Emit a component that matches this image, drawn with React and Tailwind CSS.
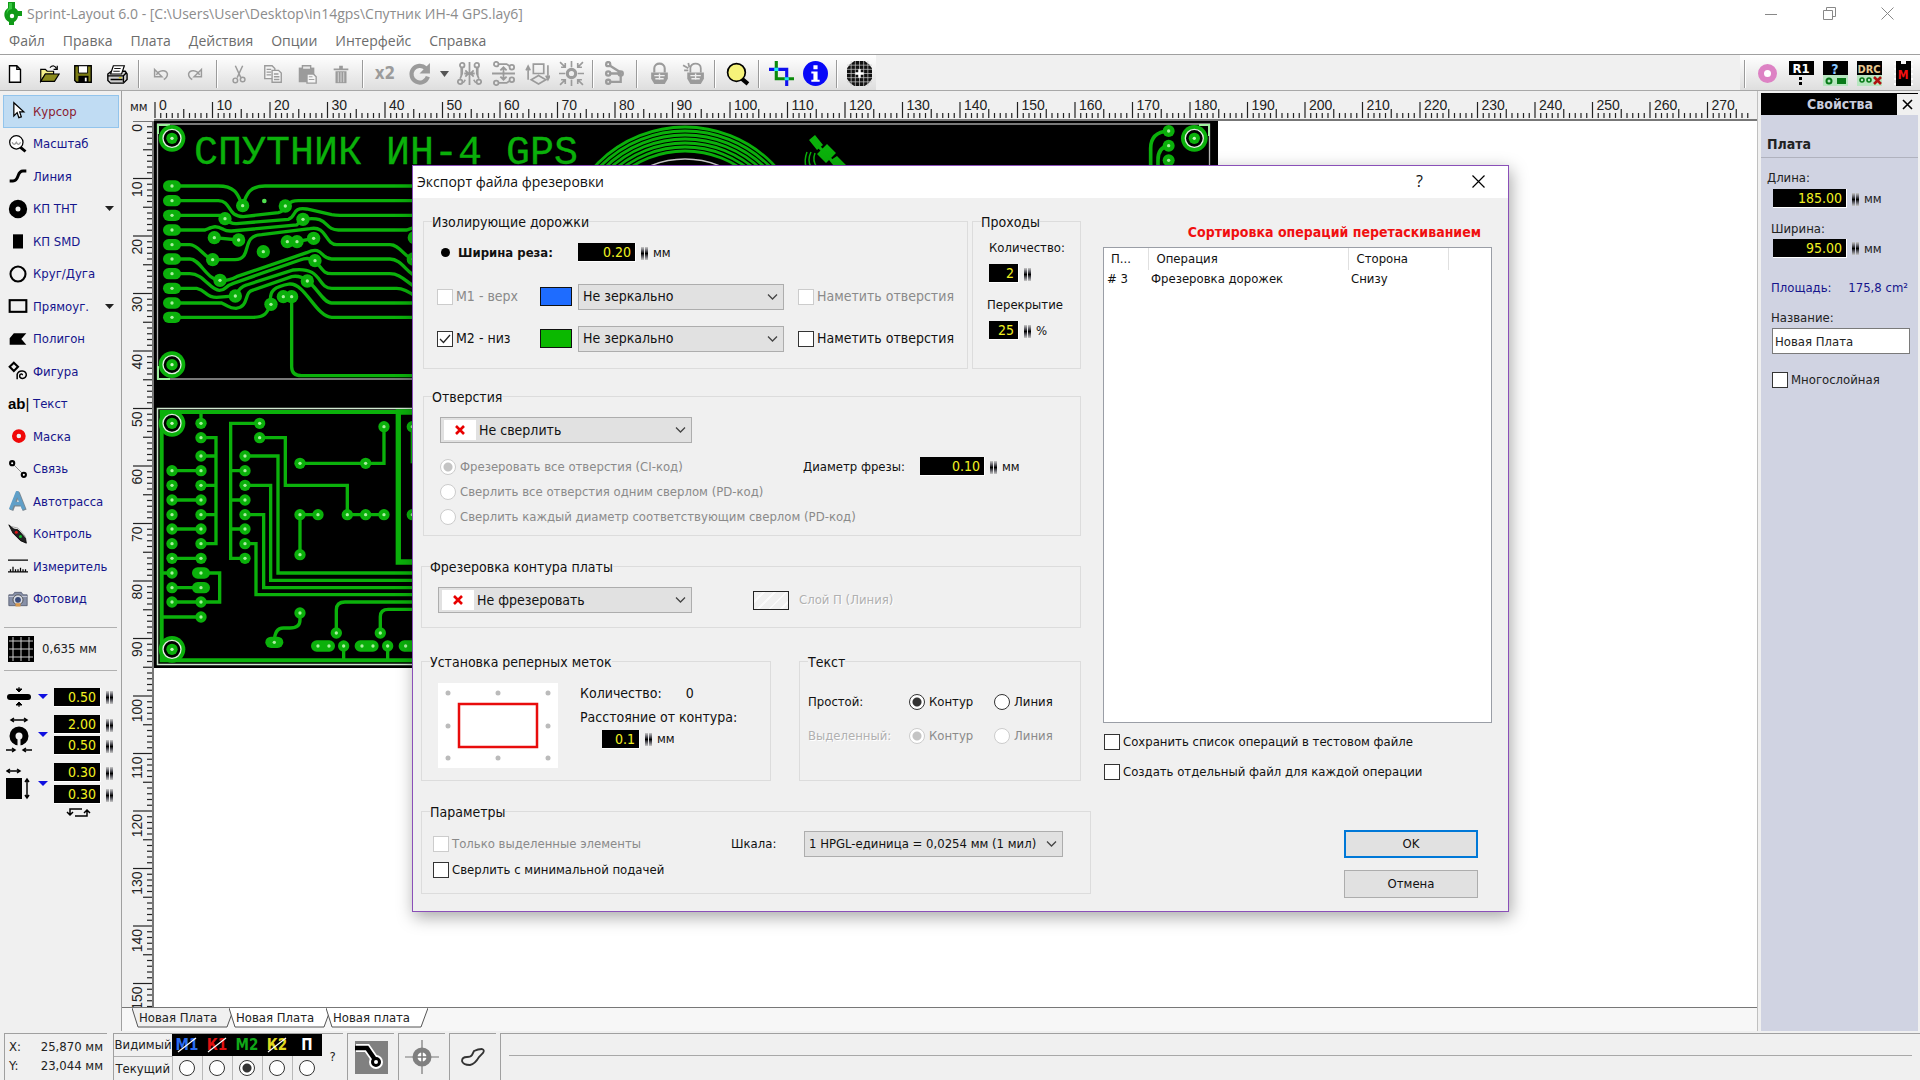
import { useState } from 'react';
import clsx from 'clsx';

const MENU = ['Файл', 'Правка', 'Плата', 'Действия', 'Опции', 'Интерфейс', 'Справка'];
const BLACK = '#000';
const GRAY = '#9b9b9b';

/* ---------- small controls ---------- */

function Spinner() {
  return (
    <svg width="9" height="18" viewBox="0 0 9 18" className="shrink-0">
      <defs>
        <linearGradient id="wheel" x1="0" y1="0" x2="0" y2="1">
          <stop offset="0" stopColor="#c8c8c8" />
          <stop offset="0.3" stopColor="#55555c" />
          <stop offset="0.5" stopColor="#000" />
          <stop offset="0.7" stopColor="#55555c" />
          <stop offset="1" stopColor="#c8c8c8" />
        </linearGradient>
      </defs>
      <rect x="1" y="3" width="3" height="13" fill="url(#wheel)" />
      <rect x="5" y="3" width="3" height="13" fill="url(#wheel)" />
    </svg>
  );
}

function NumField({ label, value, className, unit }) {
  const [v, setV] = useState(value);
  return (
    <span className="flex items-center">
      <input
        aria-label={label}
        value={v}
        onChange={(e) => setV(e.target.value)}
        className={clsx(
          'h-[19px] border-r border-b border-white bg-black pr-1 text-right text-[14px] leading-[17px] text-[#f0f020] outline-none',
          className,
        )}
      />
      <span className="ml-1 flex"><Spinner /></span>
      {unit && <span className="ml-1 text-[13px]">{unit}</span>}
    </span>
  );
}

function Check({ label, checked, disabled, className }) {
  const [on, setOn] = useState(!!checked);
  return (
    <label className={clsx('flex items-center gap-[3px]', disabled && 'text-[#8a8a8a]', className)}>
      <span className="relative flex">
        <input
          type="checkbox"
          checked={on}
          disabled={disabled}
          onChange={() => setOn(!on)}
          className="size-4 appearance-none border border-[#333] bg-white disabled:border-[#ccc]"
        />
        {on && (
          <svg className="pointer-events-none absolute inset-0" width="16" height="16" viewBox="0 0 16 16">
            <path d="M3 8l3.5 3.5L13 4" fill="none" stroke="#222" strokeWidth="1.3" />
          </svg>
        )}
      </span>
      <span className="whitespace-nowrap">{label}</span>
    </label>
  );
}

function Radio({ name, label, checked, disabled, className, ariaLabel }) {
  return (
    <label className={clsx('flex items-center gap-1', disabled && 'text-[#8a8a8a]', className)}>
      <input
        type="radio"
        name={name}
        aria-label={ariaLabel}
        defaultChecked={checked}
        disabled={disabled}
        className="size-4 shrink-0 appearance-none rounded-full border border-[#333] bg-white checked:bg-[radial-gradient(circle,#333_0_4px,#fff_5px)] disabled:border-[#ccc] disabled:checked:bg-[radial-gradient(circle,#c4c4c4_0_4px,#fff_5px)]"
      />
      {label && <span className="whitespace-nowrap">{label}</span>}
    </label>
  );
}

function Select({ label, value, className, cross, small }) {
  return (
    <span className={clsx('relative flex', className)}>
      <select
        aria-label={label}
        className={clsx(
          'h-[26px] w-full appearance-none border border-[#adadad] bg-[#e1e1e1] outline-none',
          cross ? 'pl-[38px]' : 'pl-1',
          small && 'text-[13px]',
        )}
      >
        <option>{value}</option>
      </select>
      {cross && (
        <span className="pointer-events-none absolute top-[3px] left-1 flex h-5 w-8 items-center justify-center bg-white">
          <svg width="10" height="10" viewBox="0 0 10 10">
            <path d="M1 1l8 8M9 1l-8 8" stroke="#e80000" strokeWidth="2.6" />
          </svg>
        </span>
      )}
      <svg className="pointer-events-none absolute top-2 right-1.5" width="11" height="10" viewBox="0 0 11 10">
        <path d="M1 2.5l4.5 4.5L10 2.5" fill="none" stroke="#444" strokeWidth="1.3" />
      </svg>
    </span>
  );
}

function Group({ title, className, children }) {
  return (
    <fieldset className={clsx('border border-[#dcdcdc]', className)}>
      <legend className="ml-2 h-5 leading-[22px]">{title}</legend>
      {children}
    </fieldset>
  );
}

/* ---------- toolbar ---------- */

const ICONS = {
  new: <path d="M6 3h8l4 4v14H6zM14 3v4h4" fill="#fff" stroke={BLACK} strokeWidth="1.5" />,
  open: (
    <>
      <path d="M3 20V7h5l2 2h7v3H8z" fill="#f5f08a" stroke={BLACK} strokeWidth="1.3" />
      <path d="M3 20l5-8h15l-5 8z" fill="#8a8a1c" stroke={BLACK} strokeWidth="1.3" />
      <path d="M13 5c3-3 6-2 7 1M21 3v4h-4" fill="none" stroke={BLACK} strokeWidth="1.3" />
    </>
  ),
  save: (
    <>
      <path d="M3 3h18v18H5l-2-2z" fill="#7c7c14" stroke={BLACK} strokeWidth="1.5" />
      <path d="M7 3h10v8H7z" fill="#fff" stroke={BLACK} />
      <path d="M7 14h11v7H7z" fill={BLACK} />
      <path d="M14 16h2v4h-2z" fill="#fff" />
    </>
  ),
  print: (
    <>
      <path d="M2 12l4-3h15l2 3v6l-4 4H5l-3-3z" fill="#cfcfcf" stroke={BLACK} strokeWidth="1.5" />
      <path d="M8 3h12l-3 9H5z" fill="#fff" stroke={BLACK} strokeWidth="1.3" />
      <path d="M9 6h7M8 9h7" stroke={BLACK} />
      <path d="M2 14h17l3-3M5 18h13M19 14v7" fill="none" stroke={BLACK} strokeWidth="1.5" />
      <path d="M14 16h3" stroke="#d8d020" strokeWidth="1.5" />
    </>
  ),
  undo: <path d="M5 7v8h8zM7 13c3-6 11-6 12-1 0 3-2 5-4 6" fill="none" stroke={GRAY} strokeWidth="1.6" />,
  redo: <path d="M19 7v8h-8zM17 13c-3-6-11-6-12-1 0 3 2 5 4 6" fill="none" stroke={GRAY} strokeWidth="1.6" />,
  cut: (
    <g fill="none" stroke={GRAY} strokeWidth="1.6">
      <path d="M8 3l6 13M16 3l-6 13" />
      <circle cx="8" cy="19" r="2.5" />
      <circle cx="16" cy="18" r="2.5" />
    </g>
  ),
  copy: (
    <g fill="#f4f4f4" stroke={GRAY} strokeWidth="1.5">
      <path d="M3 3h8l3 3v11H3z" />
      <path d="M11 8h7l3 3v10H11z" />
      <path d="M5 7h5M5 10h5M5 13h5M13 12h5M13 15h6M13 18h6" />
    </g>
  ),
  paste: (
    <>
      <path d="M3 5h17v16H3z" fill={GRAY} />
      <path d="M7 3h9v4H7z" fill="#e8e8e8" stroke={GRAY} strokeWidth="1.5" />
      <path d="M12 12h7l3 3v7H12z" fill="#f4f4f4" stroke={GRAY} strokeWidth="1.5" />
      <path d="M14 15h4M14 18h6" stroke={GRAY} />
    </>
  ),
  trash: (
    <>
      <path d="M4 6h16v2H4zM10 3h4v3h-4z" fill={GRAY} />
      <path d="M6 9h12v13H6z" fill={GRAY} />
      <path d="M9 10v11M12 10v11M15 10v11" stroke="#ddd" />
    </>
  ),
  rotate: (
    <>
      <path d="M18 7a8 8 0 1 0 2 8" fill="none" stroke={GRAY} strokeWidth="4" />
      <path d="M22 2v10H12z" fill={GRAY} />
    </>
  ),
  mirrorH: (
    <g fill="none" stroke={GRAY} strokeWidth="1.7">
      <path d="M12 1v22M7 12h3M14 12h3M8 9l3 3-3 3M16 9l-3 3 3 3M5 6v6l-2 5M19 6v6l2 5" />
      <path d="M4 6v8M20 6v8M8 18l-2 3M16 18l2 3" strokeWidth="1.4" />
      <circle cx="5" cy="4" r="2.2" /><circle cx="19" cy="4" r="2.2" />
      <circle cx="3" cy="20" r="2.2" /><circle cx="21" cy="20" r="2.2" />
    </g>
  ),
  mirrorV: (
    <g fill="none" stroke={GRAY} strokeWidth="1.7">
      <path d="M1 12h22M12 7v10M9 9l3-3 3 3M9 15l3 3 3-3M7 3h8l3 2M7 21h8l3-2" />
      <circle cx="5" cy="3" r="2.2" /><circle cx="20" cy="6" r="2.2" />
      <circle cx="5" cy="21" r="2.2" /><circle cx="20" cy="18" r="2.2" />
    </g>
  ),
  toSide: (
    <g fill="none" stroke={GRAY} strokeWidth="1.6">
      <path d="M8 3h10v9H8zM6 18l7-4 7 4-7 4zM3 18V6M1 9l2-4 2 4M22 4v13M20 14l2 4 2-4" />
    </g>
  ),
  snap: (
    <g fill="none" stroke={GRAY} strokeWidth="1.6">
      <circle cx="12" cy="12" r="4" strokeWidth="3" />
      <path d="M12 0v6M12 18v6M0 12h6M18 12h6M1 1l5 5M6 2v4H2M23 1l-5 5M18 2v4h4M1 23l5-5M6 22v-4H2M23 23l-5-5M18 22v-4h4" />
    </g>
  ),
  nodes: (
    <g fill="none" stroke={GRAY} strokeWidth="2.2">
      <path d="M6 4l11 7v9H7M7 12h9" />
      <circle cx="5" cy="3" r="2" /><circle cx="5" cy="12" r="2" />
      <circle cx="5" cy="20" r="2" /><circle cx="17" cy="12" r="2" />
    </g>
  ),
  lock: (
    <>
      <path d="M7 11V7c0-6 10-6 10 0v4" fill="none" stroke={GRAY} strokeWidth="2" />
      <path d="M4 11h16v6l-3 5H7l-3-5z" fill={GRAY} />
      <path d="M7 14h10M8 17h8M12 12v6" stroke="#eee" strokeWidth="1.3" />
    </>
  ),
  unlock: (
    <>
      <path d="M9 11V7c0-6 10-6 10 0v4M2 4l5 3M3 9h4M7 2l1 4" fill="none" stroke={GRAY} strokeWidth="1.7" />
      <path d="M6 11h16v6l-3 5H9l-3-5z" fill={GRAY} />
      <path d="M9 14h10M10 17h8M14 12v6" stroke="#eee" strokeWidth="1.3" />
    </>
  ),
  zoom: (
    <>
      <path d="M16 17l6 5" stroke={BLACK} strokeWidth="4" />
      <circle cx="11" cy="11" r="8.5" fill="#f6f37a" stroke={BLACK} strokeWidth="1.6" />
    </>
  ),
  crop: (
    <g fill="none" strokeWidth="3">
      <path d="M7 0v17h17" stroke="#0a8a0a" />
      <path d="M0 8h17v16" stroke="#1010ee" />
      <path d="M5 8h4M15 17h4" stroke="#20e8e8" />
    </g>
  ),
  info: (
    <>
      <circle cx="12" cy="12" r="12" fill="#0808f8" />
      <path d="M10 4h4v4h-4zM8 10h6v8h2v2H8v-2h2v-6H8z" fill="#fff" />
    </>
  ),
  mask: (
    <>
      <path d="M7 0h10l4 3 3 4v10l-3 4-4 3H7l-4-3-3-4V7l3-4z" fill="#111" />
      <path d="M0 4h24M0 8h24M0 16h24M0 20h24M4 0v24M8 0v24M16 0v24M20 0v24M0 12h24M12 0v24" stroke="#c8c8c8" strokeWidth="0.7" />
      <path d="M12 8v8M8 12h8" stroke="#fff" strokeWidth="2.4" />
    </>
  ),
};

const BIG = ['crop', 'info', 'mask', 'zoom', 'mirrorH', 'mirrorV', 'toSide', 'snap', 'nodes', 'rotate', 'lock', 'unlock'];

const GROUPS = [
  [['new', 'Новый'], ['open', 'Открыть'], ['save', 'Сохранить'], ['print', 'Печать']],
  [['undo', 'Отменить'], ['redo', 'Вернуть']],
  [['cut', 'Вырезать'], ['copy', 'Копировать'], ['paste', 'Вставить'], ['trash', 'Удалить']],
  [['x2', 'Дублировать'], ['rotate', 'Повернуть'], ['arrow', 'Угол'], ['mirrorH', 'Зеркально по горизонтали'], ['mirrorV', 'Зеркально по вертикали'], ['toSide', 'На другую сторону'], ['snap', 'Привязка']],
  [['nodes', 'Соединения']],
  [['lock', 'Заблокировать'], ['unlock', 'Разблокировать']],
  [['zoom', 'Масштаб']],
  [['crop', 'Обрезать'], ['info', 'Информация']],
  [['mask', 'Паяльная маска']],
];

function Sep() {
  return <span className="mx-1 h-7 w-0.5 shrink-0 border-r border-white bg-[#9a9a9a]" />;
}

function ToolButton({ id, title }) {
  if (id === 'arrow') {
    return (
      <button type="button" aria-label={title} className="flex w-4 justify-center">
        <svg width="9" height="6" viewBox="0 0 9 6"><path d="M0 0h9L4.5 6z" fill="#555" /></svg>
      </button>
    );
  }
  const size = BIG.includes(id) ? 25 : 22;
  return (
    <button type="button" aria-label={title} className="flex h-8 w-[34px] shrink-0 items-center justify-center">
      {id === 'x2' ? (
        <span className="text-[17px] font-bold text-[#9b9b9b]">x2</span>
      ) : (
        <svg width={size} height={size} viewBox="0 0 24 24">{ICONS[id]}</svg>
      )}
    </button>
  );
}

function Toolbar() {
  return (
    <div className="flex h-[37px] shrink-0 justify-between border-t border-b border-t-[#a0a0a0] border-b-[#a8a8a8]">
      <div className="flex items-center bg-linear-to-b from-white to-[#dedede] pt-0.5">
        <div className="-ml-0.5 flex items-center">
          {GROUPS.map((g, i) => (
            <div key={i} className="flex items-center">
              {i > 0 && <Sep />}
              {g.map(([id, title]) => <ToolButton key={id} id={id} title={title} />)}
            </div>
          ))}
        </div>
      </div>
      <div className="flex items-center bg-linear-to-b from-white to-[#dedede] pt-0.5">
        <Sep />
        <button type="button" aria-label="Точка" className="flex w-[34px] justify-center">
          <span className="size-[19px] rounded-full border-6 border-[#dd82c4] bg-white" />
        </button>
        <button type="button" aria-label="R1" className="flex w-[34px] justify-center">
          <svg width="25" height="25" viewBox="0 0 25 25">
            <rect width="25" height="14" />
            <text x="12" y="12" textAnchor="middle" fontSize="13" fontWeight="700" fill="#fff">R1</text>
            <rect x="10" y="16" width="3" height="3" /><rect x="10" y="21" width="3" height="3" />
          </svg>
        </button>
        <button type="button" aria-label="Помощь" className="flex w-[34px] justify-center">
          <svg width="25" height="25" viewBox="0 0 25 25">
            <rect width="25" height="25" fill="#b8e6c0" />
            <rect width="25" height="14" />
            <text x="12" y="13" textAnchor="middle" fontSize="14" fontWeight="700" fill="#8cc8ff">?</text>
            <circle cx="6" cy="20" r="2.5" fill="none" stroke="#087a18" strokeWidth="2" />
            <rect x="14" y="17" width="9" height="6" fill="#087a18" />
          </svg>
        </button>
        <button type="button" aria-label="DRC" className="flex w-[34px] justify-center">
          <svg width="25" height="25" viewBox="0 0 25 25">
            <rect width="25" height="25" fill="#b8e6c0" />
            <rect width="25" height="14" />
            <text x="12" y="12" textAnchor="middle" fontSize="11" fontWeight="700" fill="#e8c890">DRC</text>
            <circle cx="5" cy="19" r="2" fill="none" stroke="#087a18" strokeWidth="1.6" />
            <circle cx="12" cy="19" r="2" fill="none" stroke="#087a18" strokeWidth="1.6" />
            <path d="M17 16l7 7M24 16l-7 7" stroke="#b01010" strokeWidth="2.6" />
          </svg>
        </button>
        <button type="button" aria-label="Макрос" className="flex w-[34px] justify-center">
          <svg width="19" height="25" viewBox="0 0 19 25">
            <path d="M2 0h5v3h5V0h5v25H2z" />
            <path d="M1 2v22M18 2v22" stroke="#fff" strokeWidth="2" strokeDasharray="2 3" />
            <text x="9" y="18" textAnchor="middle" fontSize="12" fontWeight="700" fill="#f01010">M</text>
          </svg>
        </button>
      </div>
    </div>
  );
}

/* ---------- left tools ---------- */

const TOOLS = [
  ['Курсор', <path d="M7 2v16l4-4 2 6 3-1-2-6h5z" fill="#fff" stroke={BLACK} strokeWidth="1.5" />],
  ['Масштаб', (
    <>
      <path d="M15 16l6 5" stroke={BLACK} strokeWidth="3.5" />
      <circle cx="10" cy="10" r="8" fill="#fff" stroke={BLACK} strokeWidth="1.5" />
      <path d="M5 10q2 5 5 0 3 5 5 0" fill="none" stroke="#999" strokeWidth="1.5" />
    </>
  )],
  ['Линия', <path d="M2 18h4q4 0 6-6t6-6h4" fill="none" stroke={BLACK} strokeWidth="3.5" />],
  ['КП THT', <circle cx="12" cy="12" r="7" fill="none" stroke={BLACK} strokeWidth="8" />, true],
  ['КП SMD', <rect x="6" y="4" width="12" height="17" />],
  ['Круг/Дуга', <circle cx="12" cy="12" r="9" fill="none" stroke={BLACK} strokeWidth="2.5" />],
  ['Прямоуг.', <rect x="2" y="5" width="20" height="14" fill="none" stroke={BLACK} strokeWidth="2.5" />, true],
  ['Полигон', <path d="M2 19V11l5-6h15l-6 7 6 7z" />],
  ['Фигура', (
    <g fill="none" stroke={BLACK}>
      <path d="M7 2l5 5-5 5-5-5z" strokeWidth="2.5" />
      <path d="M17 17c1-2-3-2-3 1 0 4 7 4 8-1 0-6-9-7-11-1v6" strokeWidth="1.8" />
    </g>
  )],
  ['Текст', null],
  ['Маска', <circle cx="13" cy="12" r="5.5" fill="none" stroke="#f00808" strokeWidth="5.5" />],
  ['Связь', (
    <>
      <path d="M5 5l14 14" stroke="#777" />
      <circle cx="5" cy="5" r="2.5" fill="#fff" stroke={BLACK} strokeWidth="2.5" />
      <circle cx="19" cy="19" r="2.5" fill="#fff" stroke={BLACK} strokeWidth="2.5" />
    </>
  )],
  ['Автотрасса', (
    <g fill="none" strokeLinejoin="round">
      <path d="M4 23L12 3l8 20M7 16h11" stroke="#7a8790" strokeWidth="5" />
      <path d="M3 22L11 2l8 20M6 15h11" stroke="#5f9fc8" strokeWidth="4" />
    </g>
  )],
  ['Контроль', (
    <>
      <path d="M1 1l6 5 5 1 9 10 1 6-7-3L6 11z" stroke={BLACK} fill="#222" />
      <circle cx="10" cy="10" r="1.8" fill="#e01818" /><circle cx="15" cy="15" r="1.8" fill="#12c030" />
      <path d="M4 3l8 2 9 10" fill="none" stroke="#999" />
    </>
  )],
  ['Измеритель', (
    <>
      <path d="M0 5h24M0 19h24" stroke={BLACK} strokeWidth="1.5" />
      <path d="M3 19v-3M6 19v-6M9 19v-3M12 19v-3M15 19v-5M18 19v-3M21 19v-3" stroke={BLACK} strokeWidth="1.5" />
    </>
  )],
  ['Фотовид', (
    <>
      <path d="M1 7h5l2-3h8l2 3h5v13H1z" fill="#8790a8" stroke="#555c70" />
      <path d="M1 9h22" stroke="#d0d4e0" />
      <circle cx="12" cy="13" r="6" fill="#d8dce6" stroke="#444" />
      <circle cx="12" cy="13" r="3.5" fill="#3c4c78" />
      <path d="M9 17h6v4H9z" fill="#d89a50" />
    </>
  )],
];

function BlueArrow() {
  return <svg width="10" height="6" viewBox="0 0 10 6"><path d="M0 0h10L5 5z" fill="#1010e0" /></svg>;
}

function LeftPanel() {
  const [active, setActive] = useState('Курсор');
  return (
    <aside className="flex w-[122px] shrink-0 flex-col border-r border-[#a0a0a0] pt-1">
      <div className="grid h-[520px] auto-rows-fr pr-0.5 pl-[3px]">
        {TOOLS.map(([name, icon, menu]) => (
          <button
            key={name}
            type="button"
            onClick={() => setActive(name)}
            className={clsx(
              'flex items-center border px-1 text-left text-[13px]',
              active === name ? 'border-[#92c4ec] bg-[#c0dcf3] text-[#8a1a30]' : 'border-transparent text-[#15158c]',
            )}
          >
            <span className="flex w-[25px] shrink-0">
              {icon ? (
                <svg width="20" height="20" viewBox="0 0 24 24">{icon}</svg>
              ) : (
                <span className="font-['Liberation_Sans',sans-serif] text-[15px] font-bold text-black">ab<span className="font-normal">|</span></span>
              )}
            </span>
            <span className="flex-1">{name}</span>
            {menu && <svg width="9" height="5" viewBox="0 0 9 5"><path d="M0 0h9L4.5 5z" fill="#222" /></svg>}
          </button>
        ))}
      </div>
      <div className="mx-1 mt-3 flex items-center gap-2 border-t border-b border-[#b0b0b0] py-2 pl-1 text-[13px]">
        <svg width="26" height="26" viewBox="0 0 26 26">
          <rect width="26" height="26" />
          <path d="M5 1v24M13 1v24M21 1v24M1 5h24M1 13h24M1 21h24" stroke="#ccc" />
        </svg>
        0,635 мм
      </div>
      <div className="mt-4 flex flex-col gap-2 pr-1.5 pl-1.5">
        <div className="flex items-center">
          <svg width="26" height="20" viewBox="0 0 26 20">
            <rect x="1" y="7" width="24" height="6" rx="3" />
            <path d="M10 2h6l-3 3zM10 18h6l-3-3zM13 0v3M13 17v3" stroke={BLACK} />
          </svg>
          <span className="mr-1.5 ml-1.5"><BlueArrow /></span>
          <NumField label="Ширина дорожки" value="0.50" className="w-[47px]" />
        </div>
        <div className="flex items-center">
          <svg width="26" height="36" viewBox="0 0 26 36">
            <circle cx="13" cy="19" r="6.5" fill="none" stroke={BLACK} strokeWidth="6" />
            <path d="M13 19v11" stroke="#eee" strokeWidth="3" />
            <path d="M6 3h14M8 1L5 3l3 2M18 1l3 2-3 2M0 33h8M6 31l3 2-3 2M26 33h-8M20 31l-3 2 3 2" fill="none" stroke={BLACK} strokeWidth="1.5" />
          </svg>
          <span className="mr-1.5 ml-1.5"><BlueArrow /></span>
          <div className="flex flex-col gap-0.5">
            <NumField label="Диаметр площадки" value="2.00" className="w-[47px]" />
            <NumField label="Диаметр отверстия" value="0.50" className="w-[47px]" />
          </div>
        </div>
        <div className="flex items-center">
          <svg width="26" height="32" viewBox="0 0 26 32">
            <rect y="10" width="16" height="21" />
            <path d="M2 3h11M4 1L1 3l3 2M11 1l3 2-3 2M21 12v17M19 14l2-3 2 3M19 27l2 3 2-3" fill="none" stroke={BLACK} strokeWidth="1.5" />
          </svg>
          <span className="mr-1.5 ml-1.5"><BlueArrow /></span>
          <div className="flex flex-col gap-[3px]">
            <NumField label="Ширина SMD" value="0.30" className="w-[47px]" />
            <NumField label="Высота SMD" value="0.30" className="w-[47px]" />
          </div>
        </div>
      </div>
      <button type="button" aria-label="Поменять местами" className="mt-1 ml-[66px] flex">
        <svg width="25" height="9" viewBox="0 0 25 9">
          <path d="M16 1H4v5M1 4l3 3 3-3M9 8h12V3M18 5l3-3 3 3" fill="none" stroke={BLACK} strokeWidth="1.5" />
        </svg>
      </button>
    </aside>
  );
}

/* ---------- rulers ---------- */

const STEP = 5.75;

function HRuler() {
  const ticks = Array.from({ length: 278 }, (_, i) => i);
  return (
    <svg className="h-7 min-w-0 flex-1 overflow-hidden font-['Liberation_Sans',sans-serif]">
      {ticks.map((i) => {
        const x = 1 + i * STEP;
        const top = i % 10 === 0 ? 9 : i % 5 === 0 ? 16 : 20;
        return <path key={i} d={`M${x} ${top}V25`} stroke="#222" strokeWidth="1.2" />;
      })}
      {ticks.filter((i) => i % 10 === 0).map((i) => (
        <text key={i} x={5 + i * STEP} y="17" fontSize="14" fill="#222">{i}</text>
      ))}
      <rect y="26" width="100%" height="2" fill="#777" />
    </svg>
  );
}

function VRuler() {
  const ticks = Array.from({ length: 155 }, (_, i) => i);
  return (
    <svg className="w-8 shrink-0 overflow-hidden font-['Liberation_Sans',sans-serif]">
      {ticks.map((i) => {
        const left = i % 10 === 0 ? 11 : i % 5 === 0 ? 21 : 25;
        return <path key={i} d={`M${left} ${i * STEP}H30`} stroke="#222" strokeWidth="1.2" />;
      })}
      {ticks.filter((i) => i % 10 === 0).map((i) => (
        <text key={i} transform={`translate(20 ${i * STEP + 3}) rotate(-90)`} textAnchor="end" fontSize="14" fill="#222">{i}</text>
      ))}
      <rect x="30" width="2" height="100%" fill="#777" />
    </svg>
  );
}

/* ---------- printed circuit board ---------- */

const G = '#0bb10b';

function Pad({ x, y, r = 17 }) {
  return (
    <>
      <circle cx={x} cy={y} r={r} fill={G} />
      <circle cx={x} cy={y} r="5" fill="#a8f0a0" />
    </>
  );
}

function OvalPad({ x, y, w = 54 }) {
  return (
    <>
      <rect x={x - w / 2} y={y - 17} width={w} height="34" rx="17" fill={G} />
      <circle cx={x} cy={y} r="5" fill="#a8f0a0" />
    </>
  );
}

function Mount({ x, y }) {
  return (
    <>
      <circle cx={x} cy={y} r="40" fill={G} />
      <circle cx={x} cy={y} r="27" fill="#000" stroke="#e0f0e0" strokeWidth="4" />
      <circle cx={x} cy={y} r="17" fill={G} />
      <circle cx={x} cy={y} r="5" fill="#c8f8c0" />
    </>
  );
}

const TOP_TRACES = [
  'M66 228H205C265 228 265 265 278 287C290 250 300 228 345 228H800',
  'M66 272H205C245 272 230 320 280 320L385 308Q400 305 406 288C425 275 425 272 445 272H800',
  'M66 316H210L225 326Q240 342 260 341L415 328C440 320 425 290 470 297L545 314Q555 316 570 316H800',
  'M66 360H165C190 350 195 345 220 358Q230 364 245 363L440 345L459 328C540 315 520 360 565 360H770L800 350',
  'M66 404H120C145 404 160 440 188 449H255C310 449 270 375 335 374L480 356C530 345 525 404 560 404H720C750 404 760 440 800 455',
  'M66 447H120C150 447 170 510 210 511Q230 515 260 500L470 428C520 405 510 447 545 447H720C755 447 770 490 800 500',
  'M66 491H120C160 491 180 540 208 541C230 541 220 530 250 520L450 450Q475 440 495 452C520 480 520 491 545 491H720C755 491 770 520 800 532',
  'M66 535H140C170 540 165 562 200 562L255 558Q270 530 290 525L430 480C520 470 500 535 545 535H740Q765 535 800 562',
  'M66 579H215C240 590 235 595 258 595C300 590 280 545 310 540L425 500Q450 495 472 513C500 530 520 579 545 579H800',
  'M66 622H310C345 622 350 610 363 583C355 540 375 530 420 522C465 520 500 622 545 622H800',
  'M425 560V770Q425 797 455 797H800',
  'M193 383L266 390', 'M412 395H441L491 385',
];

const TOP_PADS = [
  [278, 287], [406, 288], [225, 326], [459, 328], [193, 383], [266, 390], [412, 395], [441, 395], [491, 385],
  [188, 449], [340, 425], [210, 511], [495, 452], [256, 558], [472, 513], [363, 583], [400, 560], [425, 560],
  [793, 383], [790, 447],
];

const BOTTOM_TRACES = [
  'M153 68V100', 'M153 143H198V461H153M153 198H198M153 286H198M153 374H198',
  'M66 242H153M66 330H153M66 417H153M66 505H153M35 549H66M66 593H153M66 636H209V549H153M35 681H153',
  'M329 100H242V505H285M242 242H285M242 330H285M242 417H285',
  'M329 143H406V286H592V374H702', 'M285 198H384V549H800', 'M285 286H362V571H800',
  'M285 374H341V593H800', 'M285 461H318V614H800', 'M450 220H702V110', 'M504 374H450V494',
  'M450 669V690Q450 714 420 714H400Q373 714 373 757', 'M559 729V660Q559 636 585 636H800',
  'M691 729V680Q691 658 715 658H800', 'M581 768V808M713 768V808', 'M787 110V220',
];

const BOTTOM_PADS = [
  [153, 100], [153, 143], [153, 198], [153, 242], [153, 286], [153, 330], [153, 374], [153, 417], [153, 461],
  [153, 505], [153, 636], [153, 681], [66, 242], [66, 286], [66, 330], [66, 374], [66, 417], [66, 461], [66, 505],
  [66, 549], [66, 593], [66, 636], [329, 100], [329, 143], [285, 198], [285, 242], [285, 286], [285, 330],
  [285, 374], [285, 417], [285, 461], [285, 505], [450, 220], [647, 220], [702, 110], [450, 374], [504, 374],
  [592, 374], [647, 374], [702, 374], [450, 494], [450, 669], [559, 729], [691, 729], [581, 768], [713, 768],
  [787, 110], [787, 374],
];

function Board() {
  return (
    <svg width="1064" height="547" viewBox="154 121 1064 547" className="block bg-black">
      <rect x="157.500" y="124" width="1052" height="255" fill="none" stroke="#b8b8b8" strokeWidth="1.3" />
      <rect x="157.500" y="408.500" width="1070" height="256" fill="none" stroke="#d0e8d0" strokeWidth="1.5" />
      <path d="M158 134V125H170M158 366V379H170M1199 125H1209V136" fill="none" stroke="#a0f0a0" strokeWidth="2" />
      <g transform="translate(150 110) scale(0.3333)" fill="none" stroke={G} strokeWidth="10">
        {TOP_TRACES.map((d) => <path key={d} d={d} />)}
      </g>
      <g transform="translate(150 110) scale(0.3333)">
        {[228, 272, 316, 360, 404, 447, 491, 535, 579, 622].map((y) => <OvalPad key={y} x={66} y={y} />)}
        {TOP_PADS.map(([x, y]) => <Pad key={`${x}-${y}`} x={x} y={y} r={20} />)}
        <circle cx="343" cy="273" r="7" fill="#50e050" />
        <Mount x={66} y={85} />
        <Mount x={66} y={764} />
      </g>
      <text x="194" y="164" fontSize="40" fontFamily="Liberation Mono" fill={G} stroke={G} strokeWidth="0.3" xmlSpace="preserve">
        СПУТНИК ИН-4 GPS
      </text>
      {[123, 119, 115, 111, 107, 103, 99].map((r) => (
        <circle key={r} cx="685" cy="250" r={r} fill="none" stroke={G} strokeWidth="2.8" />
      ))}
      <circle cx="685" cy="250" r="91" fill="none" stroke="#ccc" strokeWidth="1.5" />
      <g fill={G}>
        <path d="M809 140l6-5 8 10-6 5zM831 160l6-4 10 10h-12zM817 154l10-10 9 9-10 10z" />
        <path d="M817 145l10 10 8 10" fill="none" stroke={G} strokeWidth="3" />
        <path d="M815 153q-3 8 2 14M811 152q-4 8 0 15M807 152q-3 8-1 15" fill="none" stroke={G} strokeWidth="1.5" />
      </g>
      <g transform="translate(1080 110) scale(0.3333)">
        <path d="M266 63Q212 66 212 115V180M266 107Q234 112 234 150V180" fill="none" stroke={G} strokeWidth="11" />
        <Pad x={266} y={63} r={18} />
        <Pad x={266} y={107} r={18} />
        <Pad x={266} y={151} r={18} />
        <Mount x={343} y={85} />
      </g>
      <g transform="translate(150 390) scale(0.3333)">
        <path d="M800 66H35V811H800" fill="none" stroke={G} strokeWidth="12" />
        <path d="M800 66H745V516H800" fill="none" stroke={G} strokeWidth="16" />
        <path d="M30 62h60v40H30zM30 775h60v38H30z" fill={G} />
        <g fill="none" stroke={G} strokeWidth="10">
          {BOTTOM_TRACES.map((d) => <path key={d} d={d} />)}
        </g>
        {BOTTOM_PADS.map(([x, y]) => <Pad key={`${x}-${y}`} x={x} y={y} />)}
        <OvalPad x={153} y={549} />
        <OvalPad x={153} y={593} />
        <OvalPad x={373} y={757} />
        <rect x="483" y="751" width="72" height="34" rx="17" fill={G} />
        <rect x="614" y="751" width="72" height="34" rx="17" fill={G} />
        <rect x="746" y="751" width="72" height="34" rx="17" fill={G} />
        {[504, 537, 636, 669, 767].map((x) => <circle key={x} cx={x} cy="768" r="5" fill="#a8f0a0" />)}
        <Mount x={66} y={100} />
        <Mount x={66} y={778} />
      </g>
    </svg>
  );
}

/* ---------- board tabs ---------- */

function SheetTab({ children, active }) {
  return (
    <button type="button" className="relative -mr-[5px] flex h-5 w-[102px] items-center pl-[7px] text-[13px]">
      <svg className="absolute inset-0" width="102" height="20" viewBox="0 0 102 20">
        <path d="M0 0l6 19h89l7-19" fill={active ? '#f0f0f0' : '#fff'} stroke="#555" />
      </svg>
      <span className="relative leading-[18px]">{children}</span>
    </button>
  );
}

/* ---------- properties ---------- */

function Properties() {
  return (
    <aside className="mt-0.5 mr-0.5 flex w-[157px] shrink-0 flex-col bg-[#d0d3e2] text-[13px]">
      <div className="flex h-[22px] items-center justify-end bg-black">
        <span className="mr-6 text-[14px] font-bold text-[#c8ccdc]">Свойства</span>
        <button type="button" aria-label="Закрыть" className="flex size-[21px] items-center justify-center bg-[#f0f0f0]">
          <svg width="11" height="11" viewBox="0 0 11 11"><path d="M1 1l9 9M10 1l-9 9" stroke="#000" strokeWidth="1.6" /></svg>
        </button>
      </div>
      <h2 className="border-b border-[#b0b2be] pt-5 pb-1 pl-1.5 text-[14px] leading-[18px] font-bold">Плата</h2>
      <div className="mt-2.5 pl-1.5 leading-5">Длина:</div>
      <div className="mt-px pl-3"><NumField label="Длина" value="185.00" unit="мм" className="w-[74px]" /></div>
      <div className="mt-2.5 pl-2.5 leading-5">Ширина:</div>
      <div className="pl-3"><NumField label="Ширина" value="95.00" unit="мм" className="w-[74px]" /></div>
      <div className="mt-5 flex justify-between pr-2.5 pl-2.5 leading-5 text-[#15158c]">
        <span>Площадь:</span>
        <span>175,8 cm²</span>
      </div>
      <label htmlFor="board-name" className="mt-2.5 pl-2.5 leading-5">Название:</label>
      <input
        id="board-name"
        defaultValue="Новая Плата"
        className="mx-[11px] h-[26px] w-[138px] border border-[#7a7a7a] bg-white px-0.5 outline-none"
      />
      <Check label="Многослойная" className="mt-4 pl-[11px]" />
    </aside>
  );
}

/* ---------- milling export dialog ---------- */

function LayerRow({ name, color, on, off }) {
  return (
    <div className="flex items-center pl-[13px]">
      <Check label={name} checked={on} disabled={off} className="w-[103px]" />
      <span className={clsx('mr-1.5 h-[19px] w-8 border border-[#111]', color)} />
      <Select label={`${name}: отражение`} value="Не зеркально" className="mr-3.5 w-[206px]" />
      <Check label="Наметить отверстия" disabled={off} />
    </div>
  );
}

function FiducialPreview() {
  const dots = [];
  for (const x of [10, 60, 110]) {
    for (const y of [10, 43, 75]) if (x !== 60 || y !== 43) dots.push([x, y]);
  }
  return (
    <svg width="120" height="85" viewBox="0 0 120 85" className="bg-white">
      {dots.map(([x, y]) => <circle key={`${x}-${y}`} cx={x} cy={y} r="2.5" fill="#bbb" />)}
      <rect x="21" y="21" width="78" height="43" fill="none" stroke="#e80c0c" strokeWidth="2.5" />
    </svg>
  );
}

function ExportDialog() {
  return (
    <div
      role="dialog"
      aria-label="Экспорт файла фрезеровки"
      className="absolute top-[165px] left-[412px] w-[1097px] border border-[#8a4fb8] bg-[#f0f0f0] text-[14px] text-[#111] shadow-[2px_5px_16px_rgba(0,0,0,0.35)]"
    >
      <div className="flex h-8 items-center bg-white pb-0.5 pl-1 font-['Open_Sans',sans-serif]">
        <span className="flex-1">Экспорт файла фрезеровки</span>
        <button type="button" aria-label="Справка" className="w-[57px] text-[16px]">?</button>
        <button type="button" aria-label="Закрыть окно" className="flex w-[60px] justify-center">
          <svg width="13" height="13" viewBox="0 0 13 13"><path d="M0.5 0.5l12 12M12.5 0.5l-12 12" stroke="#000" strokeWidth="1.2" /></svg>
        </button>
      </div>

      <div className="flex gap-3 pt-[13px] pb-[17px] pl-2">
        <div className="w-[670px]">
          <div className="flex h-[158px] gap-1 pl-0.5">
            <Group title="Изолирующие дорожки" className="w-[545px]">
              <div className="flex items-center pt-3 pl-[17px]">
                <span className="mr-2 size-[9px] rounded-full bg-black" />
                <span className="w-[120px] text-[13px] font-bold">Ширина реза:</span>
                <NumField label="Ширина реза" value="0.20" unit="мм" className="w-[58px]" />
              </div>
              <div className="mt-[21px] flex flex-col gap-4">
                <LayerRow name="М1 - верх" color="bg-[#1e6cff]" off />
                <LayerRow name="М2 - низ" color="bg-[#0bb800]" on />
              </div>
            </Group>
            <Group title="Проходы" className="w-[109px]">
              <div className="flex flex-col pl-4">
                <span className="mt-[7px] text-[13px] leading-5">Количество:</span>
                <span className="mt-1.5 flex"><NumField label="Количество проходов" value="2" className="w-[30px]" /></span>
                <span className="mt-3 -ml-0.5 text-[13px] leading-5">Перекрытие</span>
                <span className="mt-1.5 flex"><NumField label="Перекрытие" value="25" unit="%" className="w-[30px]" /></span>
              </div>
            </Group>
          </div>

          <Group title="Отверстия" className="mt-[17px] ml-0.5 h-[150px] w-[658px]">
            <div className="pt-[11px] pl-4">
              <Select label="Отверстия" value="Не сверлить" cross className="w-[252px]" />
              <div className="mt-[11px] flex h-[25px] items-center text-[13px]">
                <Radio name="drill" label="Фрезеровать все отверстия (CI-код)" checked disabled className="w-[363px]" />
                <span className="w-[117px]">Диаметр фрезы:</span>
                <NumField label="Диаметр фрезы" value="0.10" unit="мм" className="w-[65px]" />
              </div>
              <Radio name="drill" label="Сверлить все отверстия одним сверлом (PD-код)" disabled className="h-[25px] text-[13px]" />
              <Radio name="drill" label="Сверлить каждый диаметр соответствующим сверлом (PD-код)" disabled className="h-[25px] text-[13px]" />
            </div>
          </Group>

          <Group title="Фрезеровка контура платы" className="mt-5 h-[72px] w-[660px]">
            <div className="flex items-center pt-[11px] pl-4">
              <Select label="Фрезеровка контура платы" value="Не фрезеровать" cross className="w-[254px]" />
              <span className="mr-2.5 ml-[61px] h-[19px] w-9 border border-[#222] bg-[repeating-linear-gradient(135deg,#f0f0f0_0_6px,#fafafa_6px_8px)]" />
              <span className="text-[13px] text-[#b0b0b0] [text-shadow:1px_1px_0_#fff]">Слой П (Линия)</span>
            </div>
          </Group>

          <div className="mt-[23px] flex h-[130px] gap-7">
            <Group title="Установка реперных меток" className="w-[350px]">
              <div className="flex pt-3 pl-4">
                <FiducialPreview />
                <div className="flex flex-col pl-[22px] leading-5">
                  <span className="flex gap-6"><span>Количество:</span><span>0</span></span>
                  <span className="mt-1">Расстояние от контура:</span>
                  <span className="mt-0.5 flex pl-[22px]"><NumField label="Расстояние от контура" value="0.1" unit="мм" className="w-[38px]" /></span>
                </div>
              </div>
            </Group>
            <Group title="Текст" className="w-[282px]">
              <div className="mt-3.5 flex h-[34px] items-center pl-2 text-[13px]">
                <span className="w-[101px]">Простой:</span>
                <Radio name="plain" label="Контур" checked className="w-[85px]" />
                <Radio name="plain" label="Линия" />
              </div>
              <div className="flex h-[34px] items-center pl-2 text-[13px]">
                <span className="w-[101px] text-[#b0b0b0] [text-shadow:1px_1px_0_#fff]">Выделенный:</span>
                <Radio name="bold" label="Контур" checked disabled className="w-[85px]" />
                <Radio name="bold" label="Линия" disabled />
              </div>
            </Group>
          </div>

          <Group title="Параметры" className="mt-5 h-[93px]">
            <div className="mt-2.5 flex h-[26px] items-center pl-[11px] text-[13px]">
              <Check label="Только выделенные элементы" disabled className="w-[298px]" />
              <label htmlFor="scale" className="w-[73px]">Шкала:</label>
              <Select label="Шкала" value="1 HPGL-единица = 0,0254 мм (1 мил)" small className="w-[259px]" />
            </div>
            <Check label="Сверлить с минимальной подачей" className="h-[25px] pl-[11px] text-[13px]" />
          </Group>
        </div>

        <div className="flex w-[389px] flex-col text-[13px]">
          <div className="mt-[11px] pr-[11px] text-right text-[14px] leading-5 font-bold text-[#f01010]">
            Сортировка операций перетаскиванием
          </div>
          <div className="mt-[5px] h-[476px] border border-[#9a9ea6] bg-white">
            <table className="w-full table-fixed text-left">
              <colgroup>
                <col className="w-[44px]" />
                <col className="w-[200px]" />
                <col className="w-[100px]" />
                <col />
              </colgroup>
              <thead>
                <tr className="h-[22px]">
                  <th className="border-r border-[#e0e0e0] pl-[7px] font-normal">П...</th>
                  <th className="border-r border-[#e0e0e0] pl-2 font-normal">Операция</th>
                  <th className="border-r border-[#e0e0e0] pl-2 font-normal">Сторона</th>
                  <th />
                </tr>
              </thead>
              <tbody>
                <tr className="h-[18px] leading-[18px]">
                  <td className="pl-[3px]"># 3</td>
                  <td className="pl-[3px]">Фрезеровка дорожек</td>
                  <td className="pl-[3px]">Снизу</td>
                  <td />
                </tr>
              </tbody>
            </table>
          </div>
          <Check label="Сохранить список операций в тестовом файле" className="mt-2 h-[22px] pl-px" />
          <Check label="Создать отдельный файл для каждой операции" className="mt-2 h-[22px] pl-px" />
          <div className="mt-auto -mb-1 flex flex-col items-end gap-3 pr-3.5">
            <button type="button" className="h-7 w-[134px] border-2 border-[#0078d7] bg-[#e1e1e1]">OK</button>
            <button type="button" className="h-7 w-[134px] border border-[#adadad] bg-[#e1e1e1]">Отмена</button>
          </div>
        </div>
      </div>
    </div>
  );
}

/* ---------- status bar ---------- */

const LAYERS = [
  ['М1', 'text-[#2a6cf0]', true],
  ['К1', 'text-[#e01010]', true],
  ['М2', 'text-[#10a818]', false],
  ['К2', 'text-[#e0d820]', true],
  ['П', 'text-white', false],
];

function StatusBar() {
  const cell = 'border-t border-l border-[#a0a0a0] h-[47px]';
  return (
    <footer className="flex h-[49px] shrink-0 items-end gap-1 bg-[#f0f0f0] pl-1 text-[13px]">
      <div className={clsx(cell, 'mr-0.5 flex w-[103px] flex-col justify-center pr-1 pb-0.5 pl-1 leading-[19px]')}>
        <div className="flex justify-between"><span>X:</span><span>25,870 мм</span></div>
        <div className="flex justify-between"><span>Y:</span><span>23,044 мм</span></div>
      </div>
      <div className={clsx(cell, 'flex w-[230px]')}>
        <table className="h-full table-fixed">
          <tbody>
            <tr className="h-[22px]">
              <th className="w-[58px] border-b border-[#b0b0b0] font-normal">Видимый</th>
              {LAYERS.map(([name, color, hidden]) => (
                <td key={name} className="w-[30px] bg-black">
                  <button type="button" className={clsx('relative flex w-[30px] justify-center text-[15px] leading-5 font-bold', color)}>
                    {name}
                    {hidden && (
                      <svg className="absolute top-0.5 left-1" width="22" height="16" viewBox="0 0 22 16">
                        <path d="M2 15L20 1" stroke="#fff" strokeWidth="1.2" />
                      </svg>
                    )}
                  </button>
                </td>
              ))}
            </tr>
            <tr>
              <th className="font-normal">Текущий</th>
              {LAYERS.map(([name]) => (
                <td key={name} className="border-l border-[#b8b8b8]">
                  <Radio name="layer" ariaLabel={name} checked={name === 'М2'} className="justify-center" />
                </td>
              ))}
            </tr>
          </tbody>
        </table>
        <button type="button" className="flex-1">?</button>
      </div>
      <button type="button" aria-label="Дорожка" className={clsx(cell, 'flex w-[47px] items-center justify-center')}>
        <svg width="33" height="33" viewBox="0 0 33 33">
          <rect width="33" height="33" fill="#808080" />
          <path d="M1 7h11l9 13" fill="none" stroke="#fff" strokeWidth="8" />
          <circle cx="21" cy="21" r="7" fill="#fff" />
          <path d="M0 7h12l9 13" fill="none" stroke="#000" strokeWidth="4.5" />
          <circle cx="21" cy="21" r="3.5" fill="#fff" stroke="#000" strokeWidth="3" />
        </svg>
      </button>
      <button type="button" aria-label="Центр" className={clsx(cell, 'flex w-[47px] items-center justify-center')}>
        <svg width="34" height="34" viewBox="0 0 34 34">
          <path d="M17 0v34M0 17h34" stroke="#777" strokeWidth="1.2" />
          <circle cx="17" cy="17" r="7" fill="#fff" stroke="#808080" strokeWidth="5" />
          <path d="M17 12v10M12 17h10" stroke="#777" strokeWidth="1.5" />
        </svg>
      </button>
      <button type="button" aria-label="Контур" className={clsx(cell, 'flex w-[47px] items-center justify-center')}>
        <svg width="24" height="18" viewBox="0 0 24 18">
          <path d="M13 3q4-2 8-2 3 1 1 4l-4 4q-4 7-9 8-7 0-8-4 0-4 5-4 4 0 5-2z" fill="none" stroke="#333" strokeWidth="1.8" />
        </svg>
      </button>
      <div className={clsx(cell, 'flex flex-1 items-center px-2 pb-1')}>
        <div className="h-px flex-1 bg-[#a8a8a8]" />
      </div>
    </footer>
  );
}

export default function App() {
  return (
    <div className="relative flex h-screen flex-col overflow-hidden bg-[#f0f0f0] font-['DejaVu_Sans_Condensed','DejaVu_Sans',sans-serif] text-[#222]">
      <header className="bg-white font-['Open_Sans',sans-serif] text-[14px] text-[#8c8c8c]">
        <div className="flex h-[27px] items-center">
          <svg className="ml-[3px]" width="20" height="23" viewBox="0 0 20 23">
            <path d="M5 0h7v6a8 8 0 0 1 3 3h4v5h-4a8 8 0 0 1-4 6v3H6v-3a8 8 0 0 1-1-14z" fill="#109a18" />
            <path d="M6 1h3v6a6 6 0 0 0-5 6 7 7 0 0 1 2-7z" fill="#38c840" />
            <circle cx="9" cy="14" r="2.2" fill="#fff" />
          </svg>
          <h1 className="ml-1 flex-1">Sprint-Layout 6.0 - [C:\Users\User\Desktop\in14gps\Спутник ИН-4 GPS.lay6]</h1>
          <div className="flex items-center">
            <button type="button" aria-label="Свернуть" className="flex w-[58px] justify-center">
              <svg width="12" height="12" viewBox="0 0 12 12"><path d="M0 6.5h12" stroke="#888" /></svg>
            </button>
            <button type="button" aria-label="Развернуть" className="flex w-[58px] justify-center">
              <svg width="13" height="13" viewBox="0 0 13 13"><path d="M3.5 3V0.5h9v9H10M0.5 3.5h9v9h-9z" fill="none" stroke="#888" /></svg>
            </button>
            <button type="button" aria-label="Выход" className="mr-1 flex w-[58px] justify-center">
              <svg width="13" height="13" viewBox="0 0 13 13"><path d="M0.5 0.5l12 12M12.5 0.5l-12 12" stroke="#888" /></svg>
            </button>
          </div>
        </div>
        <nav className="flex h-[27px] items-center gap-[18px] pl-[9px] text-[#6c6c6c]">
          {MENU.map((m) => <a key={m} href="#menu">{m}</a>)}
        </nav>
      </header>

      <Toolbar />

      <main className="flex min-h-0 flex-1">
        <LeftPanel />
        <div className="flex min-w-0 flex-1 flex-col">
          <div className="mt-0.5 flex">
            <span className="w-8 shrink-0 pt-1 pl-2 text-[13px]">мм</span>
            <HRuler />
          </div>
          <div className="flex min-h-0 flex-1">
            <VRuler />
            <div className="min-w-0 flex-1 overflow-hidden bg-white">
              <Board />
            </div>
          </div>
          <div className="flex h-6 items-start border-t border-[#777] bg-[#f7f7f7] pl-2.5">
            <SheetTab active>Новая Плата</SheetTab>
            <SheetTab>Новая Плата</SheetTab>
            <SheetTab>Новая плата</SheetTab>
          </div>
        </div>
        <div className="w-1 border-l border-[#c0c0c0]" />
        <Properties />
      </main>

      <StatusBar />
      <ExportDialog />
    </div>
  );
}
